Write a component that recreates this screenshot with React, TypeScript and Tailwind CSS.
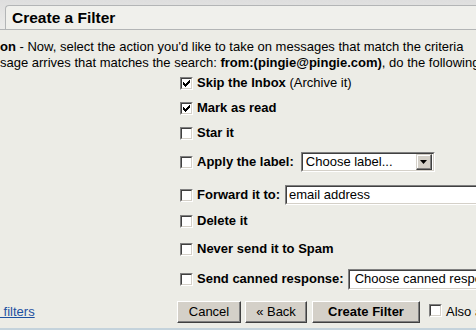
import React from "react";

function Check({ checked = false }: { checked?: boolean }) {
  return (
    <span className="inline-flex h-[13px] w-[13px] shrink-0 border border-t-[#808080] border-l-[#808080] border-b-white border-r-white">
      <span className="flex h-full w-full items-center justify-center border border-t-[#404040] border-l-[#404040] border-b-[#d4d0c8] border-r-[#d4d0c8] bg-white">
        {checked && (
          <svg width="7" height="7" viewBox="0 0 7 7" className="block">
            <path d="M0 2h1v1h1v1h1v-1h1v-1h1v-1h1v-1h1v3h-1v1h-1v1h-1v1h-1v1h-1v-1h-1v-1h-1v-1h-1z" fill="#000" />
          </svg>
        )}
      </span>
    </span>
  );
}

function Sunken({ className, children }: { className?: string; children?: React.ReactNode }) {
  return (
    <span className={"flex shrink-0 border border-t-[#808080] border-l-[#808080] border-b-white border-r-white " + (className ?? "")}>
      <span className="flex h-full w-full items-center border border-t-[#404040] border-l-[#404040] border-b-[#d4d0c8] border-r-[#d4d0c8] bg-white">
        {children}
      </span>
    </span>
  );
}

function Btn({ className, children }: { className?: string; children: React.ReactNode }) {
  return (
    <span className={"flex h-[22px] shrink-0 items-center justify-center border border-t-white border-l-white border-b-[#404040] border-r-[#404040] bg-[#d4d0c8] shadow-[inset_-1px_-1px_0_#808080] " + (className ?? "")}>
      {children}
    </span>
  );
}

function Row({ className, checked, children }: { className?: string; checked?: boolean; children: React.ReactNode }) {
  return (
    <div className={"flex h-[20px] items-center whitespace-nowrap pl-[180px] " + (className ?? "")}>
      <Check checked={checked} />
      <span className="ml-[4px] flex items-center">{children}</span>
    </div>
  );
}

export default function App() {
  return (
    <div className="flex h-[330px] w-[476px] flex-col overflow-hidden bg-[#ecece6] font-['Liberation_Sans',Arial,sans-serif] text-[13px] leading-[16px] text-black">
      <div className="flex h-[30px] shrink-0 flex-col border-b border-[#b3b5b6] bg-gradient-to-b from-[#dedede] to-[#ececea]">
        <div className="ml-[5px] mt-[5px] flex flex-1 items-center rounded-tl-[4px] border-l border-t border-[#b3b5b6] bg-[#f0f0ec] pl-[6px] text-[15.5px] font-bold">
          Create a Filter
        </div>
      </div>

      <div className="mt-[9px] whitespace-nowrap">
        <b>on</b> - Now, select the action you'd like to take on messages that match the criteria
      </div>
      <div className="whitespace-nowrap">
        sage arrives that matches the search: <b>from:(pingie@pingie.com)</b>, do the following:
      </div>

      <Row className="mt-[2px]" checked>
        <b>Skip the Inbox</b>&nbsp;(Archive it)
      </Row>
      <Row className="mt-[5px]" checked>
        <b>Mark as read</b>
      </Row>
      <Row className="mt-[5px]">
        <b>Star it</b>
      </Row>
      <Row className="mt-[9px]">
        <b>Apply the label:</b>
        <Sunken className="ml-[7px] h-[20px] w-[134px]">
          <span className="flex-1 pl-[3px]">Choose label...</span>
          <span className="mr-[1px] flex h-[16px] w-[16px] items-center justify-center border border-t-[#d4d0c8] border-l-[#d4d0c8] border-b-[#404040] border-r-[#404040] bg-[#d4d0c8] shadow-[inset_-1px_-1px_0_#808080,inset_1px_1px_0_#fff]">
            <svg width="7" height="4" viewBox="0 0 7 4"><path d="M0 0h7L3.5 4z" fill="#000" /></svg>
          </span>
        </Sunken>
      </Row>
      <Row className="mt-[13px]">
        <b>Forward it to:</b>
        <Sunken className="ml-[5px] h-[20px] w-[220px]">
          <span className="pl-[2px]">email address</span>
        </Sunken>
      </Row>
      <Row className="mt-[6px]">
        <b>Delete it</b>
      </Row>
      <Row className="mt-[8px]">
        <b>Never send it to Spam</b>
      </Row>
      <Row className="mt-[10px]">
        <b>Send canned response:</b>
        <Sunken className="ml-[4px] h-[21px] w-[200px]">
          <span className="pl-[5px]">Choose canned response...</span>
        </Sunken>
      </Row>

      <div className="mt-[12px] flex h-[22px] items-center whitespace-nowrap">
        <span className="w-[177px] shrink-0 text-[#1c50a0] underline">&nbsp;filters</span>
        <Btn className="w-[64px]">Cancel</Btn>
        <Btn className="ml-[4px] w-[62px]">« Back</Btn>
        <Btn className="ml-[5px] w-[108px] font-bold">Create Filter</Btn>
        <span className="ml-[9px]"><Check /></span>
        <span className="ml-[4px]">Also apply filter to conversations below.</span>
      </div>

      <div className="mt-auto h-[2px] shrink-0 bg-[#c4d3dc]" />
    </div>
  );
}
